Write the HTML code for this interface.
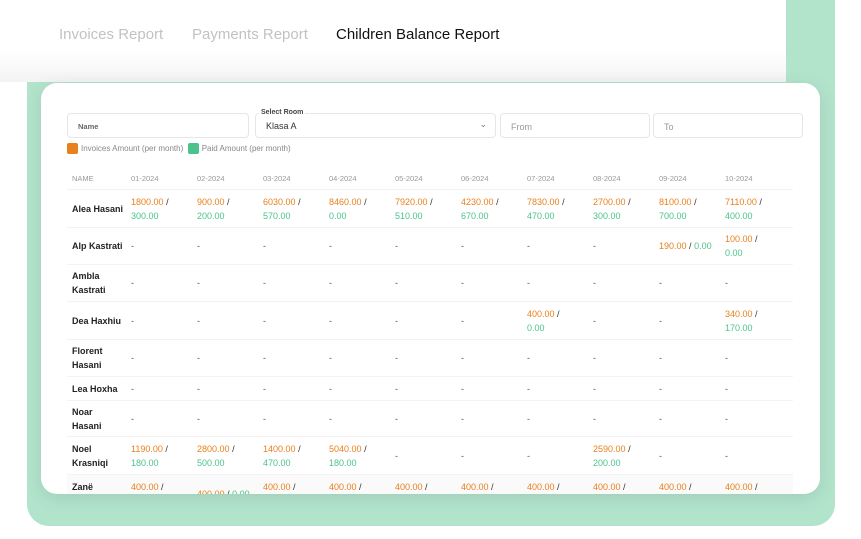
<!DOCTYPE html>
<html><head><style>
*{margin:0;padding:0;box-sizing:border-box}
body{width:861px;height:539px;background:#fff;position:relative;overflow:hidden;font-family:"Liberation Sans",sans-serif}
.green{position:absolute;left:27px;top:-30px;width:808px;height:556px;background:#b2e4cc;border-radius:22px}
.top{position:absolute;left:-20px;top:-20px;width:806px;height:102px;background:linear-gradient(#fff 0,#fff 70%,#f3f3f3 100%)}
.tab{position:absolute;top:26px;font-size:15px;color:#c2c2c2}
.card{position:absolute;left:41px;top:83px;width:779px;height:411px;background:#fff;border-radius:16px;box-shadow:0 4px 18px rgba(0,0,0,.10);overflow:hidden}
.inp{position:absolute;top:30px;height:25px;border:1px solid #e6e6e6;border-radius:4px;font-size:9px;color:#999;padding:8px 10px}
.leg{position:absolute;top:60px;font-size:8px;color:#888;display:flex;align-items:center}
.sq{width:11px;height:11px;border-radius:2px;display:inline-block;margin-right:3px}
.row{position:absolute;left:26px;width:726px;display:flex;align-items:center;border-bottom:1px solid #f3f3f3;font-size:9px;line-height:14px}
.row>div{width:66px;flex:none;color:#555}
.row>div:first-child{width:64px;padding-left:5px;font-weight:bold;color:#222}
.o{color:#e8801c}.g{color:#4cc38a}.s{color:#333}
.hd>div{color:#999!important;font-weight:normal!important;font-size:7.5px}
</style></head><body>
<div class="green"></div>
<div class="top"></div>
<div class="tab" style="left:59px">Invoices Report</div>
<div class="tab" style="left:192px">Payments Report</div>
<div class="tab" style="left:336px;color:#111">Children Balance Report</div>
<div class="card">
<div class="inp" style="left:26px;width:182px;font-size:7.5px;color:#666;font-weight:bold">Name</div>
<div class="inp" style="left:214px;width:241px;color:#333;padding-top:7px">Klasa A<span style="position:absolute;right:8px;top:5px;color:#777">&#8964;</span></div>
<div style="position:absolute;left:218px;top:26px;background:#fff;padding:0 2px;font-size:7px;font-weight:bold;color:#444">Select Room</div>
<div class="inp" style="left:459px;width:150px">From</div>
<div class="inp" style="left:612px;width:150px">To</div>
<div class="leg" style="left:26px"><span class="sq" style="background:#e8801c"></span>Invoices Amount (per month)&nbsp;&nbsp;<span class="sq" style="background:#4cc38a"></span>Paid Amount (per month)</div>
<div class="row hd" style="top:86px;height:21px"><div>NAME</div><div>01-2024</div><div>02-2024</div><div>03-2024</div><div>04-2024</div><div>05-2024</div><div>06-2024</div><div>07-2024</div><div>08-2024</div><div>09-2024</div><div>10-2024</div></div>
<div class="row" style="top:107px;height:38px"><div>Alea Hasani</div><div><span class="o">1800.00</span> <span class="s">/</span><br><span class="g">300.00</span></div><div><span class="o">900.00</span> <span class="s">/</span><br><span class="g">200.00</span></div><div><span class="o">6030.00</span> <span class="s">/</span><br><span class="g">570.00</span></div><div><span class="o">8460.00</span> <span class="s">/</span><br><span class="g">0.00</span></div><div><span class="o">7920.00</span> <span class="s">/</span><br><span class="g">510.00</span></div><div><span class="o">4230.00</span> <span class="s">/</span><br><span class="g">670.00</span></div><div><span class="o">7830.00</span> <span class="s">/</span><br><span class="g">470.00</span></div><div><span class="o">2700.00</span> <span class="s">/</span><br><span class="g">300.00</span></div><div><span class="o">8100.00</span> <span class="s">/</span><br><span class="g">700.00</span></div><div><span class="o">7110.00</span> <span class="s">/</span><br><span class="g">400.00</span></div></div>
<div class="row" style="top:145px;height:37px"><div>Alp Kastrati</div><div>-</div><div>-</div><div>-</div><div>-</div><div>-</div><div>-</div><div>-</div><div>-</div><div style="white-space:nowrap"><span class="o">190.00</span> <span class="s">/</span> <span class="g">0.00</span></div><div><span class="o">100.00</span> <span class="s">/</span><br><span class="g">0.00</span></div></div>
<div class="row" style="top:182px;height:37px"><div>Ambla<br>Kastrati</div><div>-</div><div>-</div><div>-</div><div>-</div><div>-</div><div>-</div><div>-</div><div>-</div><div>-</div><div>-</div></div>
<div class="row" style="top:219px;height:38px"><div>Dea Haxhiu</div><div>-</div><div>-</div><div>-</div><div>-</div><div>-</div><div>-</div><div><span class="o">400.00</span> <span class="s">/</span><br><span class="g">0.00</span></div><div>-</div><div>-</div><div><span class="o">340.00</span> <span class="s">/</span><br><span class="g">170.00</span></div></div>
<div class="row" style="top:257px;height:37px"><div>Florent<br>Hasani</div><div>-</div><div>-</div><div>-</div><div>-</div><div>-</div><div>-</div><div>-</div><div>-</div><div>-</div><div>-</div></div>
<div class="row" style="top:294px;height:24px"><div>Lea Hoxha</div><div>-</div><div>-</div><div>-</div><div>-</div><div>-</div><div>-</div><div>-</div><div>-</div><div>-</div><div>-</div></div>
<div class="row" style="top:318px;height:36px"><div>Noar<br>Hasani</div><div>-</div><div>-</div><div>-</div><div>-</div><div>-</div><div>-</div><div>-</div><div>-</div><div>-</div><div>-</div></div>
<div class="row" style="top:354px;height:38px"><div>Noel<br>Krasniqi</div><div><span class="o">1190.00</span> <span class="s">/</span><br><span class="g">180.00</span></div><div><span class="o">2800.00</span> <span class="s">/</span><br><span class="g">500.00</span></div><div><span class="o">1400.00</span> <span class="s">/</span><br><span class="g">470.00</span></div><div><span class="o">5040.00</span> <span class="s">/</span><br><span class="g">180.00</span></div><div>-</div><div>-</div><div>-</div><div><span class="o">2590.00</span> <span class="s">/</span><br><span class="g">200.00</span></div><div>-</div><div>-</div></div>
<div class="row" style="top:392px;height:40px;background:#fafafa;align-items:flex-start;padding-top:5px"><div>Zanë<br>Hoxha</div><div><span class="o">400.00</span> <span class="s">/</span></div><div style="padding-top:7px;white-space:nowrap"><span class="o">400.00</span> <span class="s">/</span> <span class="g">0.00</span></div><div><span class="o">400.00</span> <span class="s">/</span></div><div><span class="o">400.00</span> <span class="s">/</span></div><div><span class="o">400.00</span> <span class="s">/</span></div><div><span class="o">400.00</span> <span class="s">/</span></div><div><span class="o">400.00</span> <span class="s">/</span></div><div><span class="o">400.00</span> <span class="s">/</span></div><div><span class="o">400.00</span> <span class="s">/</span></div><div><span class="o">400.00</span> <span class="s">/</span></div></div>
</div>
</body></html>
